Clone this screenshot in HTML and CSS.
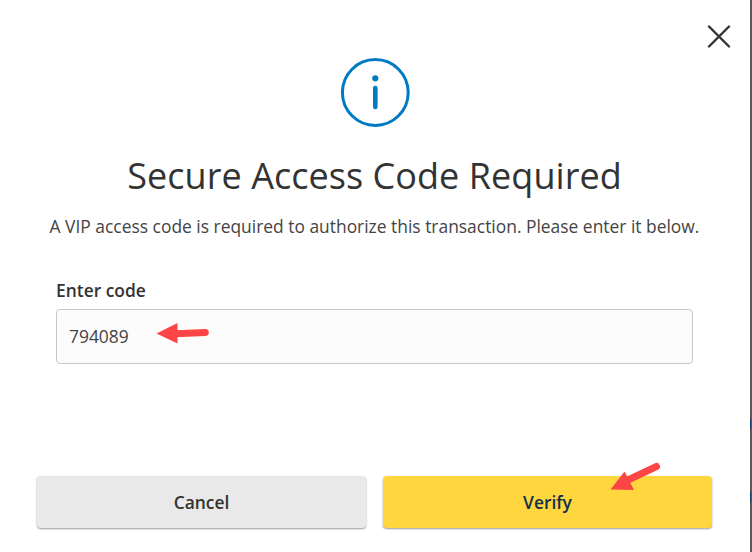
FILE: index.html
```html
<!DOCTYPE html>
<html lang="en">
<head>
    <meta charset="UTF-8">
    <meta name="viewport" content="width=device-width, initial-scale=1.0">
    <title>Secure Access Code Required</title>
    <link rel="stylesheet" href="styles.css">
</head>
<body>
    <div class="modal" role="dialog" aria-labelledby="modalTitle">
        <button type="button" class="close-button" aria-label="Close">
            <svg width="24" height="24" viewBox="0 0 24 24">
                <path d="M2 1.5L22 21.5M22 1.5L2 21.5" />
            </svg>
        </button>

        <svg class="info-icon" width="70" height="70" viewBox="0 0 70 70">
            <circle class="ring" cx="35.3" cy="34.5" r="32.9" />
            <circle class="dot" cx="35.3" cy="20.3" r="3.1" />
            <path class="stem" d="M35.3 30V49" />
        </svg>

        <h1 id="modalTitle">Secure Access Code Required</h1>
        <p class="message">A VIP access code is required to authorize this transaction. Please enter it below.</p>

        <form id="codeForm">
            <div class="form-group">
                <label for="code">Enter code</label>
                <div class="input-wrap">
                    <input type="text" id="code" name="code" value="794089">
                    <svg class="arrow arrow-code" width="54" height="24" viewBox="0 0 54 24">
                        <path class="shaft" d="M20 12.8L49.3 11.5" />
                        <path class="head" d="M0.5 12.5L21.5 2V22.5Z" />
                    </svg>
                </div>
            </div>
            <div class="buttons">
                <button type="button" class="button cancel">Cancel</button>
                <button type="submit" class="button verify">Verify
                    <svg class="arrow arrow-verify" width="54" height="32" viewBox="0 0 54 32">
                        <path class="shaft" d="M18 19L46.5 5.5" />
                        <path class="head" d="M0.5 28.5L14.5 10.5L24 29Z" />
                    </svg>
                </button>
            </div>
        </form>
    </div>
    <div class="backdrop">
        <span class="mark"></span>
        <span class="mark"></span>
    </div>
</body>
</html>
```

FILE: styles.css
```css
* {
    box-sizing: border-box;
}

body {
    margin: 0;
    display: flex;
    height: 552px;
    overflow: hidden;
    background-color: #fff;
    color: #333;
    font-family: "Open Sans", "Noto Sans", sans-serif;
}

.modal {
    position: relative;
    width: 750px;
    padding: 58px 38px 0 37px;
    background-color: #fff;
}

.backdrop {
    width: 2px;
    padding-top: 419px;
    background-color: #58595b;
}

.mark {
    display: block;
    width: 1px;
    height: 10px;
    margin-bottom: 63px;
    background-color: #163f66;
}

.close-button {
    position: absolute;
    top: 25px;
    right: 19px;
    padding: 0;
    border: none;
    background: none;
    cursor: pointer;
}

.close-button svg {
    display: block;
    fill: none;
    stroke: #333;
    stroke-width: 2.4;
    stroke-linecap: round;
}

.info-icon {
    display: block;
    margin: 0 auto;
}

.info-icon .ring {
    fill: none;
    stroke: #007ac3;
    stroke-width: 3;
}

.info-icon .dot {
    fill: #007ac3;
}

.info-icon .stem {
    stroke: #007ac3;
    stroke-width: 4.6;
    stroke-linecap: round;
}

h1 {
    margin: 24px 0 0;
    font-size: 36px;
    font-weight: 400;
    letter-spacing: 0.05px;
    line-height: 48px;
    text-align: center;
    white-space: nowrap;
}

.message {
    margin: 14px 0 0;
    color: #444;
    font-size: 17.42px;
    line-height: 24px;
    text-align: center;
    white-space: nowrap;
}

.form-group {
    margin: 40px 19px 0;
}

.form-group label {
    display: block;
    font-size: 17.4px;
    font-weight: 600;
    line-height: 25px;
}

.input-wrap {
    position: relative;
    margin-top: 6px;
}

.form-group input {
    display: block;
    width: 100%;
    height: 55px;
    padding: 0 12px 1px;
    border: 1px solid #c8c8c8;
    border-radius: 4px;
    background-color: #fcfcfc;
    color: #444;
    font-family: inherit;
    font-size: 17.4px;
}

.buttons {
    display: flex;
    gap: 17px;
    margin-top: 112px;
}

.button {
    position: relative;
    flex: 1;
    height: 52px;
    padding: 0;
    border: none;
    border-radius: 4px;
    box-shadow: 0 1px 2px rgba(0, 0, 0, 0.4);
    font-family: inherit;
    font-size: 17.4px;
    font-weight: 600;
    cursor: pointer;
}

.cancel {
    background-color: #e9e9e9;
    color: #333;
}

.verify {
    background-color: #ffd63e;
    color: #12304a;
}

.arrow {
    position: absolute;
    overflow: visible;
}

.arrow .shaft {
    stroke: #fe4545;
    stroke-width: 7;
    stroke-linecap: round;
}

.arrow .head {
    fill: #fe4545;
}

.arrow-code {
    left: 100px;
    top: 12px;
}

.arrow-verify {
    left: 227px;
    top: -15px;
}
```
